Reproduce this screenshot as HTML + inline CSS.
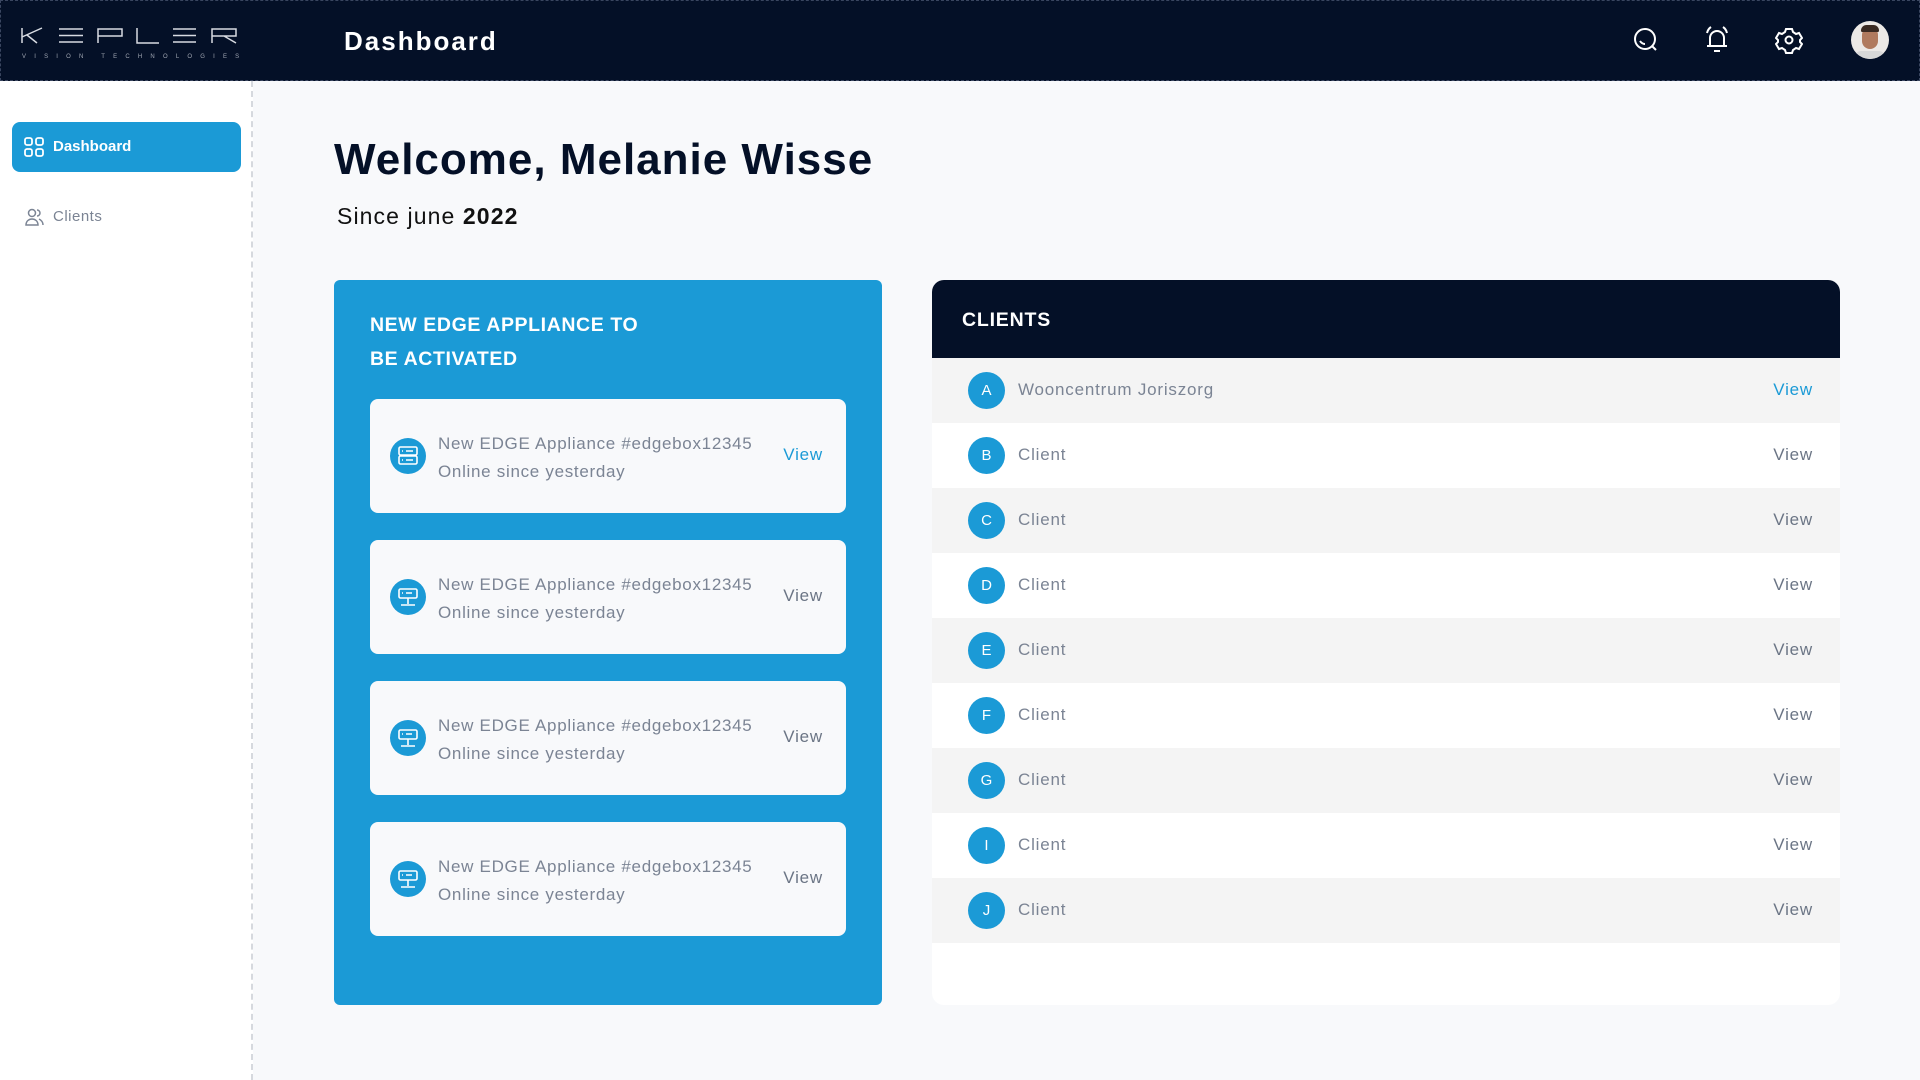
<!DOCTYPE html>
<html><head><meta charset="utf-8"><style>
*{margin:0;padding:0;box-sizing:border-box}
body{width:1920px;height:1080px;background:#f8f9fb;font-family:"Liberation Sans",sans-serif;position:relative;overflow:hidden}
.hdr{position:absolute;left:0;top:0;width:1920px;height:81px;background:#041027;border:1px dashed #3a4660}
.abs{position:absolute}
.side{position:absolute;left:0;top:81px;width:253px;height:999px;background:#fff;border-right:2px dashed #d6d9de}
.nav{position:absolute;left:12px;top:122px;width:229px;height:50px;background:#1b9ad6;border-radius:8px;color:#fff;font-weight:bold;font-size:15px}
.blue{position:absolute;left:334px;top:280px;width:548px;height:725px;background:#1b9ad6;border-radius:6px}
.card{position:absolute;left:36px;width:476px;height:114px;background:#f8f9fb;border-radius:8px}
.ic{position:absolute;left:20px;top:39px;width:36px;height:36px;border-radius:50%;background:#1b9ad6}
.ct{position:absolute;left:68px;top:31px;font-size:17px;color:#7b8494;line-height:28px;letter-spacing:.7px}
.cv{position:absolute;right:23px;top:46px;font-size:17px;color:#6b7585;letter-spacing:.8px}
.cl{position:absolute;left:932px;top:280px;width:908px;height:725px;background:#fff;border-radius:12px;overflow:hidden}
.row{position:absolute;left:0;width:908px;height:65px}
.av{position:absolute;left:36px;top:14px;width:37px;height:37px;border-radius:50%;background:#1b9ad6;color:#fff;font-size:15px;text-align:center;line-height:37px}
.rn{position:absolute;left:86px;top:22px;font-size:17px;color:#7b8494;letter-spacing:.8px}
.rv{position:absolute;right:27px;top:22px;font-size:17px;color:#6b7585;letter-spacing:.8px}
</style></head><body>
<div class="hdr"></div>
<svg class="abs" style="left:0;top:0" width="260" height="50" viewBox="0 0 260 50" fill="none" stroke="#d8dbe2" stroke-width="1.5"><path d="M22 28v15M22 37l20-9M27 35l10 8M59 29h24M59 35.5h24M59 42h24M98 43v-14h24v7h-24M137 28v15h22M173 29h23M173 35.5h23M173 42h23M212 43v-14h24v7h-24M224 36l12 7"/></svg>
<div class="abs" style="left:22px;top:54px;color:#a0a6b2;font-size:6px;letter-spacing:8.2px">VISION TECHNOLOGIES</div>
<div class="abs" style="left:344px;top:26px;color:#fff;font-size:26px;font-weight:bold;letter-spacing:2px">Dashboard</div>
<svg class="abs" style="left:1632px;top:26px" width="28" height="28" viewBox="0 0 28 28" fill="none" stroke="#fff" stroke-width="2"><circle cx="13" cy="13" r="10"/><path d="M8 15q2 3 5 3M20 20l4 4"/></svg>
<svg class="abs" style="left:1703px;top:25px" width="28" height="30" viewBox="0 0 28 30" fill="none" stroke="#fff" stroke-width="2"><path d="M7 21V13a7 7 0 0114 0v8M4 21h20M11 26h6M4 8q1-4 4-6M24 8q-1-4-4-6"/></svg>
<svg class="abs" style="left:1775px;top:26px" width="28" height="28" viewBox="0 0 28 28" fill="none" stroke="#fff" stroke-width="2"><path d="M11 3h6l1 3 3 2 3-1 3 5-2 2v2l2 2-3 5-3-1-3 2-1 3h-6l-1-3-3-2-3 1-3-5 2-2v-2l-2-2 3-5 3 1 3-2z"/><circle cx="14" cy="14" r="3.5"/></svg>
<div class="abs" style="left:1851px;top:21px;width:38px;height:38px;border-radius:50%;background:#ece9e6;overflow:hidden"><div style="position:absolute;left:11px;top:6px;width:16px;height:22px;border-radius:8px;background:#b07a5e"></div><div style="position:absolute;left:10px;top:4px;width:18px;height:7px;border-radius:8px 8px 2px 2px;background:#3a2a22"></div><div style="position:absolute;left:4px;top:30px;width:30px;height:12px;border-radius:10px;background:#d8d8d8"></div></div>
<div class="side"></div>
<div class="nav"><svg style="position:absolute;left:12px;top:15px" width="20" height="20" viewBox="0 0 20 20" fill="none" stroke="#fff" stroke-width="1.8"><rect x="1" y="1" width="7" height="7" rx="2"/><rect x="12" y="1" width="7" height="7" rx="2"/><rect x="1" y="12" width="7" height="7" rx="2"/><rect x="12" y="12" width="7" height="7" rx="2"/></svg><span style="position:absolute;left:41px;top:16px">Dashboard</span></div>
<svg class="abs" style="left:25px;top:208px" width="19" height="18" viewBox="0 0 19 18" fill="none" stroke="#7b8494" stroke-width="1.5"><circle cx="7" cy="5" r="3.5"/><path d="M1 17c0-4 3-6 6-6s6 2 6 6zM12 2a3 3 0 010 6M14 11c2 1 4 3 4 6"/></svg>
<div class="abs" style="left:53px;top:208px;font-size:15px;color:#7b8494;letter-spacing:.5px">Clients</div>
<div class="abs" style="left:334px;top:135px;font-size:44px;font-weight:bold;color:#041027;letter-spacing:1px">Welcome, Melanie Wisse</div>
<div class="abs" style="left:337px;top:203px;font-size:23px;color:#111;letter-spacing:1.1px">Since june <b>2022</b></div>
<div class="blue">
<div class="abs" style="left:36px;top:28px;color:#fff;font-weight:bold;font-size:19.5px;line-height:34px;letter-spacing:.6px">NEW EDGE APPLIANCE TO<br>BE ACTIVATED</div>
<div class="card" style="top:119px"><div class="ic"><svg width="36" height="36" viewBox="0 0 36 36" fill="none" stroke="#fff" stroke-width="1.6"><rect x="9" y="9" width="18" height="8" rx="1.5"/><rect x="9" y="18" width="18" height="8" rx="1.5"/><path d="M12 13h1M16 13h7M12 22h1M16 22h7"/></svg></div><div class="ct">New EDGE Appliance #edgebox12345<br>Online since yesterday</div><div class="cv" style="color:#1b9ad6">View</div></div>
<div class="card" style="top:260px"><div class="ic"><svg width="36" height="36" viewBox="0 0 36 36" fill="none" stroke="#fff" stroke-width="1.6"><rect x="9" y="10" width="18" height="9" rx="1.5"/><path d="M12 14h1M16 14h6M18 19v6M11 26h14"/></svg></div><div class="ct">New EDGE Appliance #edgebox12345<br>Online since yesterday</div><div class="cv">View</div></div>
<div class="card" style="top:401px"><div class="ic"><svg width="36" height="36" viewBox="0 0 36 36" fill="none" stroke="#fff" stroke-width="1.6"><rect x="9" y="10" width="18" height="9" rx="1.5"/><path d="M12 14h1M16 14h6M18 19v6M11 26h14"/></svg></div><div class="ct">New EDGE Appliance #edgebox12345<br>Online since yesterday</div><div class="cv">View</div></div>
<div class="card" style="top:542px"><div class="ic"><svg width="36" height="36" viewBox="0 0 36 36" fill="none" stroke="#fff" stroke-width="1.6"><rect x="9" y="10" width="18" height="9" rx="1.5"/><path d="M12 14h1M16 14h6M18 19v6M11 26h14"/></svg></div><div class="ct">New EDGE Appliance #edgebox12345<br>Online since yesterday</div><div class="cv">View</div></div>
</div>
<div class="cl">
<div class="abs" style="left:0;top:0;width:908px;height:78px;background:#041027"></div>
<div class="abs" style="left:30px;top:29px;color:#fff;font-weight:bold;font-size:19.5px;letter-spacing:.8px">CLIENTS</div>
<div class="row" style="top:78px;background:#f4f4f4"><div class="av">A</div><div class="rn">Wooncentrum Joriszorg</div><div class="rv" style="color:#1b9ad6">View</div></div>
<div class="row" style="top:143px;background:#fff"><div class="av">B</div><div class="rn">Client</div><div class="rv">View</div></div>
<div class="row" style="top:208px;background:#f4f4f4"><div class="av">C</div><div class="rn">Client</div><div class="rv">View</div></div>
<div class="row" style="top:273px;background:#fff"><div class="av">D</div><div class="rn">Client</div><div class="rv">View</div></div>
<div class="row" style="top:338px;background:#f4f4f4"><div class="av">E</div><div class="rn">Client</div><div class="rv">View</div></div>
<div class="row" style="top:403px;background:#fff"><div class="av">F</div><div class="rn">Client</div><div class="rv">View</div></div>
<div class="row" style="top:468px;background:#f4f4f4"><div class="av">G</div><div class="rn">Client</div><div class="rv">View</div></div>
<div class="row" style="top:533px;background:#fff"><div class="av">I</div><div class="rn">Client</div><div class="rv">View</div></div>
<div class="row" style="top:598px;background:#f4f4f4"><div class="av">J</div><div class="rn">Client</div><div class="rv">View</div></div>
</div>
</body></html>
